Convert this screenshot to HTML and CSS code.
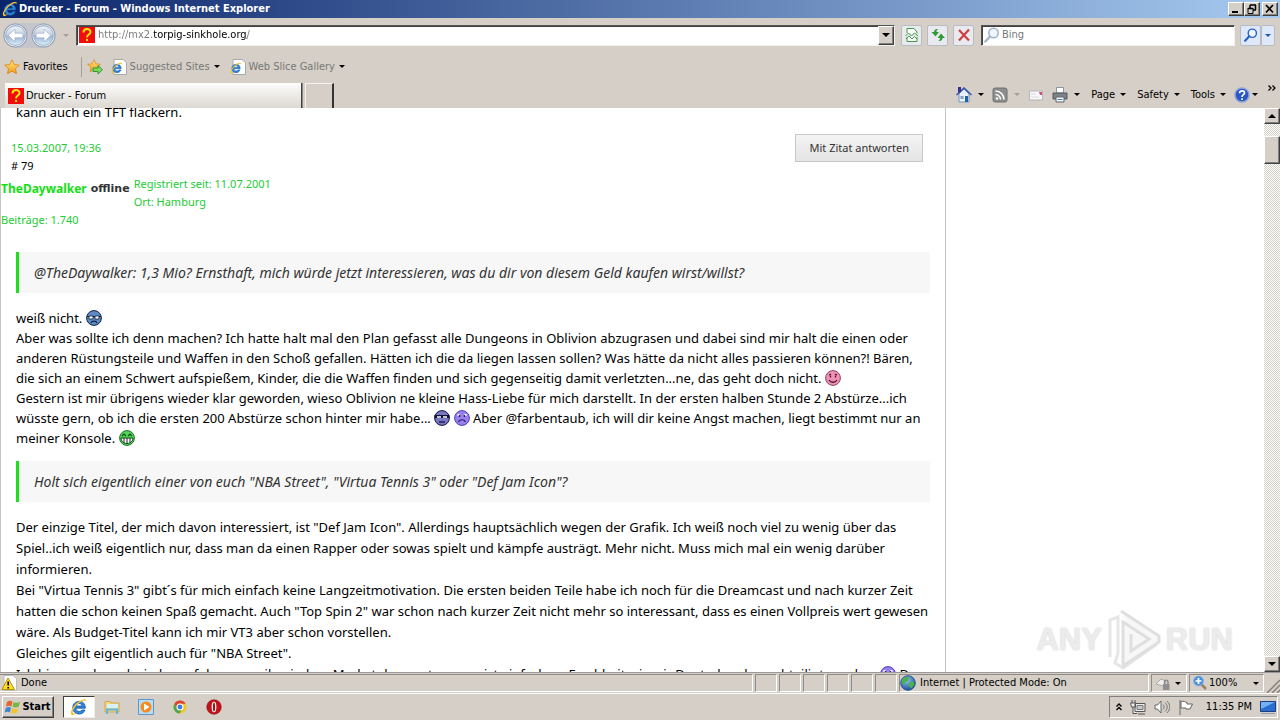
FILE: index.html
```html
<!DOCTYPE html>
<html lang="de">
<head>
<meta charset="utf-8">
<title>Drucker - Forum</title>
<link rel="stylesheet" href="styles.css">
</head>
<body>
<svg class="defs" aria-hidden="true">
  <defs>
    <radialGradient id="g-blue" cx="40%" cy="30%" r="70%"><stop offset="0" stop-color="#9cc4ee"/><stop offset="1" stop-color="#1d4fa0"/></radialGradient>
    <linearGradient id="g-orb" x1="0" y1="0" x2="0" y2="1"><stop offset="0" stop-color="#f4f6fa"/><stop offset=".48" stop-color="#c3cfe0"/><stop offset=".52" stop-color="#9db2d0"/><stop offset="1" stop-color="#d9f1fb"/></linearGradient>
    <linearGradient id="g-gold" x1="0" y1="0" x2="0" y2="1"><stop offset="0" stop-color="#ffe98a"/><stop offset="1" stop-color="#f09a12"/></linearGradient>
    <symbol id="ie" viewBox="0 0 16 16">
      <path d="M13.6 9H5.2c.2 2 1.4 3 3 3 1.200 0 2-.5 2.500-1.300h2.600c-.8 2.200-2.600 3.500-5.100 3.500C4.800 14.200 2.500 12 2.500 8.600 2.500 5.300 4.900 3 8.200 3c3.400 0 5.500 2.400 5.400 6zM5.300 7.200h5.500C10.600 5.700 9.700 4.900 8.100 4.900S5.500 5.700 5.300 7.200z" fill="#2f8be0" stroke="#1659ae" stroke-width=".8"/>
      <path d="M1.300 14.800C-.6 12.500 3.500 5.500 8.800 2.500 12.300.5 15.500.6 14.700 3.300 14.600 1.900 12.500 2 9.700 3.500 5 6.200.8 12.500 3 13.600c.8.400 2-.1 3.200-.8-1.700 1.700-3.900 3-4.900 2z" fill="#f2c230"/>
    </symbol>
    <symbol id="iepage" viewBox="0 0 16 16"><path d="M3 .5h9l3.500 3v12H3z" fill="#fff" stroke="#a9a9a9"/><use href="#ie" x="0" y="3" width="12" height="12"/></symbol>
    <symbol id="quest" viewBox="0 0 16 16"><path fill="#f20d0d" d="M0 0h16v16H0z"/><path d="M4.500 5.500C4.500 1 11.500 1 11.500 5c0 2.600-3.500 2.500-3.500 5.500" fill="none" stroke="#f5e60a" stroke-width="2"/><path fill="#f5e60a" d="M7 12h2v2H7z"/></symbol>
    <symbol id="star" viewBox="0 0 16 16"><path d="M8 .8l2.200 4.700 5.100.6-3.800 3.500 1 5.100L8 12.200l-4.500 2.500 1-5.100L.7 6.100l5.100-.6z" fill="url(#g-gold)" stroke="#d98412" stroke-width=".8"/></symbol>
    <symbol id="fly" viewBox="0 0 24 24"><circle cx="12" cy="12" r="11" fill="#fff" stroke="#8f9bb0"/><circle cx="12" cy="12" r="9.500" fill="url(#g-orb)" stroke="#9db0ca"/><path d="M5 12l6.500-6v3.800H19v4.400h-7.500V18z" fill="#fff" stroke="#8aa0bf" stroke-width=".5"/></symbol>
    <symbol id="lens" viewBox="0 0 16 16"><circle cx="9.500" cy="6" r="4.700" fill="#eef6fc" stroke="currentColor" stroke-width="1.600"/><path d="M6 9.500L1.300 14.500" stroke="currentColor" stroke-width="2.400" stroke-linecap="round"/></symbol>
    <symbol id="sad" viewBox="0 0 16 16"><circle cx="8" cy="8" r="7.400" fill="currentColor" stroke="#4e3cb4"/><path d="M3.500 5h2M10.500 5h2" stroke="#fff" stroke-width="2"/><path d="M5.500 5v2M10.500 5v2" stroke="#20206a" stroke-width="1.400"/><path d="M4.500 12c1-3 6-3 7 0" fill="none" stroke="#26206a" stroke-width="1.200"/></symbol>
  </defs>
</svg>

<header class="titlebar">
  <svg class="i16"><use href="#ie"/></svg>
  <h1>Drucker - Forum - Windows Internet Explorer</h1>
  <div class="winbtns">
    <button class="raised" aria-label="Minimize"><svg viewBox="0 0 12 10"><path d="M2 8h6" stroke="#000" stroke-width="2"/></svg></button>
    <button class="raised" aria-label="Restore"><svg viewBox="0 0 12 10"><path d="M4 1h6M4 1v3M9.500 1v5M7 6h3M2 4.500h5" fill="none" stroke="#000" stroke-width="1.500"/><path d="M2 4v5.500h5V4" fill="none" stroke="#000"/></svg></button>
    <button class="raised last" aria-label="Close"><svg viewBox="0 0 12 10"><path d="M2 1l7 7.500M9 1L2 8.500" stroke="#000" stroke-width="1.700"/></svg></button>
  </div>
</header>

<nav class="addressrow">
  <div class="orbs">
    <button aria-label="Back"><svg><use href="#fly"/></svg></button>
    <button aria-label="Forward" class="flip"><svg><use href="#fly"/></svg></button>
  </div>
  <button class="arrow pale history" aria-label="Recent pages"></button>
  <div class="sunken address">
    <svg class="i16"><use href="#quest"/></svg>
    <input class="url" aria-label="Address" value="http://mx2.torpig-sinkhole.org/">
    <button class="raised drop" aria-label="Show addresses"><i class="arrow big"></i></button>
  </div>
  <div class="tools">
    <button class="tool" aria-label="Compatibility View"><svg class="i16" viewBox="0 0 16 16"><path d="M3 6V1.500h7L13 5v1.500M3 10v4.500h10V10" fill="#fff" stroke="#3f9b45"/><path d="M1.500 9l3-3 3 3 3-3 3.500 3M2 12l3-3 3 3 2.500-2.500L13 12" fill="none" stroke="#3f9b45"/></svg></button>
    <button class="tool" aria-label="Refresh"><svg class="i16" viewBox="0 0 16 16"><path d="M8 2C5.500 1.500 4 3 4 5H1.500l4 4.500 3.500-4.500H6.500c0-1.500.5-2 1.500-3zM8.500 14c2.500.500 4-1 4-3H15l-4-4.500L7.500 11H10c0 1.500-.5 2-1.500 3z" fill="#2f9a38"/></svg></button>
    <button class="tool" aria-label="Stop"><svg class="i16" viewBox="0 0 16 16"><path d="M3 3l10 10.500M13 2.500L3 13.500" stroke="#cf4040" stroke-width="2.200"/></svg></button>
  </div>
  <div class="sunken search">
    <svg class="i16 paleLens"><use href="#lens"/></svg>
    <input aria-label="Search" placeholder="Bing">
  </div>
  <div class="split">
    <button class="tool" aria-label="Search the web"><svg class="blueLens"><use href="#lens"/></svg></button>
    <button class="tool narrow" aria-label="Search options"><i class="arrow blue"></i></button>
  </div>
</nav>

<nav class="favrow">
  <button class="link fav"><svg class="i16"><use href="#star"/></svg>Favorites</button>
  <button class="addfav" aria-label="Add to Favorites Bar"><svg class="i16" viewBox="0 0 16 16"><use href="#star" width="14" height="14"/><path d="M6 9h5V6.500l4.500 4.200L11 15v-2.500H6z" fill="#7ed957" stroke="#2f9a38"/></svg></button>
  <button class="link grey"><svg class="i16"><use href="#iepage"/></svg>Suggested Sites<i class="arrow"></i></button>
  <button class="link grey"><svg class="i16"><use href="#iepage"/></svg>Web Slice Gallery<i class="arrow"></i></button>
</nav>

<div class="tabrow">
  <button class="tab"><svg class="i16"><use href="#quest"/></svg>Drucker - Forum</button>
  <button class="newtab" aria-label="New tab"></button>
  <div class="commands">
    <button class="cmd" aria-label="Home"><svg class="i16" viewBox="0 0 16 16"><path d="M3 7v8h10V7L8 2z" fill="#e8f0fb" stroke="#7a8fc0"/><path d="M.5 8L8 1l7.500 7" fill="none" stroke="#3355b0" stroke-width="1.500"/><path fill="#3a2e8c" d="M2 0h3v4L2 6z"/><path fill="#1b63a8" d="M9 9h3v6H9z"/><path fill="#7f9ccc" d="M4.500 9h3v3h-3z"/></svg><i class="arrow"></i></button>
    <button class="cmd" aria-label="Feeds"><svg class="i16" viewBox="0 0 16 16"><rect x="1" y="1" width="14" height="14" rx="2" fill="#8d8d8d" stroke="#707070"/><circle cx="5" cy="11.500" r="1.300" fill="#fff"/><path d="M3.500 7.500a5 5 0 015 5M3.500 4a8.500 8.500 0 018.500 8.500" fill="none" stroke="#fff" stroke-width="1.600"/></svg><i class="arrow pale"></i></button>
    <button class="cmd" aria-label="Read mail"><svg class="i16" viewBox="0 0 16 16"><path d="M1.500 4h13v9h-13z" fill="#f8f8fa" stroke="#b5b5bd"/><path d="M3 7h5M3 10h8" stroke="#dcdce4"/><path d="M11 5h3v3h-2z" fill="#cc4f78"/></svg></button>
    <button class="cmd" aria-label="Print"><svg class="i16" viewBox="0 0 16 16"><path fill="#fff" stroke="#8b95a3" d="M4.500.5h7V6h-7z"/><path fill="#7c8087" stroke="#55595f" d="M1 6h14v6H1z"/><path fill="#f2f6fa" stroke="#667" d="M4 10h8v5H4z"/><path stroke="#4b86bc" d="M5.500 12.500h5"/></svg><i class="arrow"></i></button>
    <button class="cmd text">Page<i class="arrow"></i></button>
    <button class="cmd text">Safety<i class="arrow"></i></button>
    <button class="cmd text">Tools<i class="arrow"></i></button>
    <button class="cmd help" aria-label="Help"><svg class="i16" viewBox="0 0 16 16"><circle cx="8" cy="8" r="7" fill="#2b57c5" stroke="#8ba3d8" stroke-width="1.500"/><path d="M5.500 6.200c0-3.200 5-3 5-.2C10.500 7.700 8 7.700 8 10" fill="none" stroke="#fff" stroke-width="1.700"/><path fill="#fff" d="M7.200 11.200h1.700v1.700H7.200z"/></svg><i class="arrow"></i></button>
    <button class="cmd more" aria-label="More commands"><svg viewBox="0 0 8 6"><path d="M.5.500L3 3 .5 5.500M4.500.500L7 3 4.500 5.500" fill="none" stroke="#000" stroke-width="1.300"/></svg></button>
  </div>
</div>

<div class="viewport">
  <main class="page">
    <p class="prev">kann auch ein TFT flackern.</p>
    <section class="posthead">
      <div>
        <time class="green">15.03.2007, 19:36</time>
        <div class="num"># 79</div>
      </div>
      <button class="quotebtn">Mit Zitat antworten</button>
    </section>
    <section class="author">
      <a class="name" href="#u">TheDaywalker</a>
      <b>offline</b>
      <div class="green meta">Registriert seit: 11.07.2001<br>Ort: Hamburg</div>
    </section>
    <div class="green posts">Beiträge: 1.740</div>
    <article>
      <blockquote>@TheDaywalker: 1,3 Mio? Ernsthaft, mich würde jetzt interessieren, was du dir von diesem Geld kaufen wirst/willst?</blockquote>
      <p class="first">weiß nicht. <svg class="smile" viewBox="0 0 16 16"><circle cx="8" cy="8" r="7.400" fill="#5f8bc4" stroke="#0f2444"/><path d="M1 6.500h14" stroke="#10203c"/><path fill="#fff" stroke="#10203c" stroke-width=".8" d="M3 6h4v3H3zM9 6h4v3H9z"/><path d="M5 13c1-2.500 5-2.500 6 0" fill="none" stroke="#10203c" stroke-width="1.300"/></svg><br>
Aber was sollte ich denn machen? Ich hatte halt mal den Plan gefasst alle Dungeons in Oblivion abzugrasen und dabei sind mir halt die einen oder<br>
anderen Rüstungsteile und Waffen in den Schoß gefallen. Hätten ich die da liegen lassen sollen? Was hätte da nicht alles passieren können?! Bären,<br>
die sich an einem Schwert aufspießem, Kinder, die die Waffen finden und sich gegenseitig damit verletzten...ne, das geht doch nicht. <svg class="smile" viewBox="0 0 16 16"><circle cx="8" cy="8" r="7.400" fill="#ee91b4" stroke="#8e4360"/><path d="M4 5l2-1M12 5l-2-1M5.500 5.500v2M10.500 5.500v2" stroke="#4c1430" stroke-width="1.300"/><path d="M4 10c2 3 6 3 8 0" fill="none" stroke="#4c1430" stroke-width="1.300"/></svg><br>
Gestern ist mir übrigens wieder klar geworden, wieso Oblivion ne kleine Hass-Liebe für mich darstellt. In der ersten halben Stunde 2 Abstürze...ich<br>
wüsste gern, ob ich die ersten 200 Abstürze schon hinter mir habe... <svg class="smile" viewBox="0 0 16 16"><circle cx="8" cy="8" r="7.400" fill="#7777c4" stroke="#14143c"/><path d="M.5 6.500h15" stroke="#111133" stroke-width="3"/><path d="M3 7h4M9 7h4" stroke="#fff" stroke-width="1.500"/><path d="M5 12h6" stroke="#14143c" stroke-width="1.300"/></svg> <svg class="smile violet"><use href="#sad"/></svg> Aber @farbentaub, ich will dir keine Angst machen, liegt bestimmt nur an<br>
meiner Konsole. <svg class="smile" viewBox="0 0 16 16"><circle cx="8" cy="8" r="7.400" fill="#4fd858" stroke="#22742c"/><path d="M3 6l2-2 2 2M9 6l2-2 2 2" fill="none" stroke="#0c4c14" stroke-width="1.200"/><path d="M2 8h12c0 3-2.500 5.500-6 5.500S2 11 2 8z" fill="#fff" stroke="#124c1a"/><path d="M5 8v5M8 8v5.500M11 8v5" stroke="#222"/></svg></p>
      <blockquote>Holt sich eigentlich einer von euch "NBA Street", "Virtua Tennis 3" oder "Def Jam Icon"?</blockquote>
      <p class="second">Der einzige Titel, der mich davon interessiert, ist "Def Jam Icon". Allerdings hauptsächlich wegen der Grafik. Ich weiß noch viel zu wenig über das<br>
Spiel..ich weiß eigentlich nur, dass man da einen Rapper oder sowas spielt und kämpfe austrägt. Mehr nicht. Muss mich mal ein wenig darüber<br>
informieren.<br>
Bei "Virtua Tennis 3" gibt´s für mich einfach keine Langzeitmotivation. Die ersten beiden Teile habe ich noch für die Dreamcast und nach kurzer Zeit<br>
hatten die schon keinen Spaß gemacht. Auch "Top Spin 2" war schon nach kurzer Zeit nicht mehr so interessant, dass es einen Vollpreis wert gewesen<br>
wäre. Als Budget-Titel kann ich mir VT3 aber schon vorstellen.<br>
Gleiches gilt eigentlich auch für "NBA Street".<br>
Ich bin gerade mal wieder auf dem amerikanischen Marketplace unterwegs, ist einfach ne Frechheit wie wir Deutschen benachteiligt werden. <svg class="smile violet"><use href="#sad"/></svg> Da</p>
    </article>
  </main>
  <div class="scrollbar">
    <button class="raised" aria-label="Scroll up"><i class="arrow up"></i></button>
    <div class="raised thumb"></div>
    <button class="raised end" aria-label="Scroll down"><i class="arrow big"></i></button>
  </div>
  <div class="watermark">
    <span>ANY</span>
    <svg viewBox="0 0 56 64"><path d="M4 49V12l8-3v36l-3 10 8 5 34-24" fill="none" stroke="#e6e6e6" stroke-width="3"/><path d="M15 3l38 25v6L17 58V14l26 17-18 12V26" fill="#f7f7f7" stroke="#dfdfdf" stroke-width="3"/></svg>
    <span>RUN</span>
  </div>
</div>

<footer class="status">
  <div class="cell done"><svg class="i16" viewBox="0 0 16 16"><path fill="#fff" stroke="#bbb" d="M3 .5h9l3.500 3v12H3z"/><path d="M7 3L1 14.500h12.500z" fill="#ffdc23" stroke="#b89400"/><path d="M7.200 6.500v4M7.200 12v1.500" stroke="#000" stroke-width="1.600"/></svg>Done</div>
  <div class="cell sm"></div><div class="cell sm"></div><div class="cell sm"></div><div class="cell sm"></div><div class="cell sm"></div><div class="cell sm"></div>
  <div class="cell zone"><svg class="i16" viewBox="0 0 16 16"><circle cx="8" cy="8" r="7.300" fill="url(#g-blue)" stroke="#255a94"/><path d="M3 4c2-2 5-2.500 6-1.500L8 6 5 7.500 4 10 1.500 8zM9 8l4-2 1.500 3-3 4.500-2.500-2z" fill="#48b348"/></svg>Internet | Protected Mode: On</div>
  <button class="cell lock" aria-label="Privacy"><svg class="i16" viewBox="0 0 16 16"><path d="M1 9l5-5 5 2-3 5z" fill="#eee" stroke="#aaa"/><path d="M9.500 9V7c0-2.500 3.500-2.500 3.500 0v2" fill="none" stroke="#888" stroke-width="1.400"/><path fill="#8f8f8f" d="M8 9h6.500v6H8z"/></svg><i class="arrow"></i></button>
  <button class="cell zoom"><svg class="i16" viewBox="0 0 16 16"><path d="M9 9l5 5" stroke="#9a8260" stroke-width="2.500"/><circle cx="6.500" cy="6" r="5" fill="#4c8ede" stroke="#8fb5e4"/><path d="M3.500 6h6M6.500 3v6" stroke="#fff" stroke-width="1.700"/></svg>100%<i class="arrow"></i></button>
  <svg class="grip" viewBox="0 0 14 14"><path d="M1 14L14 1M6 14l8-8M11 14l3-3" stroke="#858178" stroke-width="1.500"/></svg>
</footer>

<footer class="taskbar">
  <button class="raised start"><svg viewBox="0 0 16 16"><path d="M2 3c2-1.500 4-1.500 5.500-.3L6.300 7.500C5 6.500 3 6.500 1 7.700z" fill="#e8632c"/><path d="M8.500 3c2 1.200 4 1 6.500 0l-1.300 4.700c-2.200 1-4.200 1-6.200 0z" fill="#76b843"/><path d="M.8 9c2-1.200 4-1.200 5.200 0L4.800 13.500c-1.500-1-3.300-1-5 0z" fill="#3d86d0"/><path d="M7.200 9c2 1.200 4.200 1.200 6.200 0L12 13.700c-2 1-4 1-6 0z" fill="#f4c430"/></svg>Start</button>
  <button class="task active" aria-label="Internet Explorer"><svg><use href="#ie"/></svg></button>
  <button class="task" aria-label="Explorer"><svg viewBox="0 0 16 16"><path fill="#f3d67c" stroke="#d0a94a" d="M1 2.500h5l1 1.500h8v9H1z"/><path fill="#d8f0fa" d="M3 5h11v4H3z"/><path fill="none" stroke="#62b5dd" stroke-width="2" d="M3 15v-4.500h10V15"/></svg></button>
  <button class="task" aria-label="Media Player"><svg viewBox="0 0 16 16"><path fill="#b8dcf6" stroke="#5c98cc" d="M.5.500h15v15H.5z"/><circle cx="8" cy="8" r="5.500" fill="#f68a1c"/><path fill="#fff" d="M6 4.500L11.500 8 6 11.500z"/></svg></button>
  <button class="task" aria-label="Chrome"><svg viewBox="0 0 16 16"><circle cx="8" cy="8" r="6.500" fill="#f3c623"/><path d="M2.400 4.700A6.500 6.500 0 0113.600 4.700H8L5.200 9.600z" fill="#dd4132"/><path d="M2.400 4.700A6.500 6.500 0 007.500 14.500L10.800 9.600 8 11 5.200 9.600z" fill="#4ca64c"/><circle cx="8" cy="8" r="3" fill="#3d7fd9" stroke="#fff" stroke-width="1.100"/></svg></button>
  <button class="task" aria-label="Opera"><svg viewBox="0 0 16 16"><circle cx="8" cy="8" r="7.300" fill="#c0131a" stroke="#7d0a10" stroke-width=".5"/><ellipse cx="8" cy="8" rx="2.400" ry="5.300" fill="#fff"/><ellipse cx="8" cy="8" rx="1.100" ry="4.500" fill="#a61016"/></svg></button>
  <div class="tray">
    <svg class="chev" viewBox="0 0 6 8"><path d="M.5 3.500L3 1l2.500 2.500M.5 7L3 4.500 5.500 7" fill="none" stroke="#000" stroke-width="1.300"/></svg>
    <svg class="i16" viewBox="0 0 16 16"><path d="M5 4.500h10v8H5zM8 15h7M2 1v3M5 1v3M.5 4h5v4h-4zM3 8v6.500h4" fill="#eee" stroke="#555"/><path fill="#c8c8c8" stroke="#777" d="M7 6.500h6v4H7z"/></svg>
    <svg class="i16" viewBox="0 0 16 16"><path d="M1 6h2.500L7 2v12l-3.500-4H1z" fill="#fff" stroke="#666"/><path d="M9 5.500c1.500 1.500 1.500 3.500 0 5M11 3.500c3 3 3 6 0 9M13 2c4 4 3.500 8 0 12" fill="none" stroke="#777"/></svg>
    <svg class="i16" viewBox="0 0 16 16"><path d="M2 1v15M3 2.500c3-1 4 .5 6 1v1.500h5.500L12 10H8V9H3z" fill="#fff" stroke="#666"/></svg>
    <time>11:35 PM</time>
    <svg class="i16" viewBox="0 0 16 16"><path fill="#2a6fd0" stroke="#1b3f7e" d="M.5 2.500h15v10H.5z"/><path fill="#73b1f2" d="M1 3h14L1 10z"/><path stroke="#8ea4bd" d="M1 14.500h14"/></svg>
  </div>
</footer>
</body>
</html>
```

FILE: styles.css
```css
* { box-sizing: border-box; }

body {
  margin: 0;
  height: 100vh;
  display: flex;
  flex-direction: column;
  overflow: hidden;
  background: #d5cfc7;
  color: #000;
  font: 11px/16px "DejaVu Sans Condensed", "Noto Sans", sans-serif;
}

button, input {
  margin: 0;
  padding: 0;
  border: 0;
  background: none;
  color: inherit;
  font: inherit;
}

svg { display: block; flex: none; }
.defs { position: absolute; width: 0; height: 0; }
.i16 { width: 16px; height: 16px; }

.raised {
  display: flex;
  align-items: center;
  justify-content: center;
  background: #d5cfc7;
  border: 1px solid;
  border-color: #fff #404040 #404040 #fff;
  box-shadow: inset -1px -1px #808080;
}

.sunken {
  display: flex;
  align-items: center;
  background: #fff;
  border: 1px solid;
  border-color: #555 #f4f2ee #f4f2ee #555;
  box-shadow: inset 1px 1px #404040;
}

.arrow {
  flex: none;
  width: 0;
  height: 0;
  border: 3px solid transparent;
  border-top-color: #000;
  border-bottom-width: 0;
}
.arrow.pale { border-top-color: #a59f97; }
.arrow.blue { border-top-color: #1d58b8; }
.arrow.big { border-width: 4px 4px 0; }
.arrow.up { border-width: 0 4px 4px; border-bottom-color: #000; }

/* title bar */
.titlebar {
  display: flex;
  align-items: center;
  flex: none;
  height: 18px;
  padding: 0 2px;
  gap: 1px;
  background: linear-gradient(90deg, #0a246a, #a6caf0);
  color: #fff;
}
.titlebar h1 { flex: 1; margin: 0; font-size: 11px; }
.winbtns { display: flex; }
.winbtns button { width: 16px; height: 14px; }
.winbtns svg { width: 12px; height: 10px; }
.winbtns .last { margin-left: 2px; }

/* address row */
.addressrow {
  display: flex;
  align-items: center;
  flex: none;
  height: 34px;
  padding: 0 5px 0 3px;
}
.orbs { display: flex; gap: 3px; background: #c5c6cb; border-radius: 13px; }
.orbs svg { width: 25px; height: 25px; }
.flip { transform: scaleX(-1); }
.history { margin: 0 7px; }
.address { flex: 1; height: 21px; padding-left: 2px; }
.url {
  flex: 1;
  min-width: 0;
  padding-left: 3px;
  color: transparent;
  background: linear-gradient(90deg, #777 58px, #000 58px, #000 152px, #777 152px);
  -webkit-background-clip: text;
  background-clip: text;
}
.drop { width: 16px; height: 19px; }
.tools { display: flex; gap: 5px; margin: 0 7px 0 6px; }
.tool {
  display: flex;
  align-items: center;
  justify-content: center;
  width: 21px;
  height: 21px;
  background: #e9eaf0;
  border: 1px solid #b9bbc2;
  border-radius: 2px;
}
.search { flex: 0 1 254px; height: 21px; padding-left: 2px; gap: 2px; }
.search input { flex: 1; min-width: 0; }
.search input::placeholder { color: #777; opacity: 1; }
.paleLens { color: #a3b4c8; }
.blueLens { width: 14px; height: 14px; color: #2560c4; }
.split { display: flex; margin-left: 5px; }
.split .tool { background: #dfe8f8; }
.split .narrow { width: 14px; }

/* favourites bar */
.favrow { display: flex; align-items: center; flex: none; height: 29px; padding-left: 4px; }
.link { display: flex; align-items: center; gap: 3px; }
.link .arrow { margin-left: 1px; }
.fav { padding-right: 13px; border-right: 1px solid #a5a099; height: 20px; }
.addfav { margin: 0 8px 0 5px; }
.grey { color: #777; margin-right: 10px; }

/* tab row */
.tabrow { display: flex; align-items: stretch; flex: none; height: 27px; padding: 2px 0 0 5px; }
.tab {
  display: flex;
  align-items: center;
  gap: 2px;
  flex: 0 1 297px;
  padding-left: 3px;
  background: linear-gradient(#fdfdfc, #dcd8d2);
  border-right: 1px solid #404040;
  box-shadow: 1px 0 #888;
}
.newtab { width: 29px; margin-left: 3px; border: 1px solid #f5f3f0; border-right: 2px solid #333; border-bottom: 0; }
.commands { display: flex; align-items: center; gap: 8px; margin-left: auto; padding: 0 4px 2px 0; }
.cmd { display: flex; align-items: center; gap: 5px; }
.cmd .arrow { margin-left: 1px; }
.text { margin-left: 3px; gap: 4px; }
.help { gap: 1px; }
.more { align-self: flex-start; margin: 2px 0 0 2px; }
.more svg { width: 8px; height: 6px; }

/* document */
.viewport { position: relative; display: flex; flex: 1; min-height: 0; background: #fff; }
.page {
  flex: 0 1 946px;
  overflow: hidden;
  border: 1px solid #c4c4c4;
  border-width: 0 1px;
  font: 11px/18px "Noto Sans", sans-serif;
}
.page p { margin: 0; white-space: nowrap; font-size: 13px; }
.prev { height: 26px; padding-left: 15px; line-height: 8px; }
.green { color: #22cc33; }
.posthead { display: flex; justify-content: space-between; padding: 0 22px 0 10px; }
.posthead time { display: block; margin-top: 5px; }
.quotebtn {
  height: 28px;
  padding: 0 13px;
  background: linear-gradient(#f4f4f4, #e4e4e4);
  border: 1px solid #c8c8c8;
  color: #333;
}
.author { display: flex; align-items: center; gap: 4px; height: 36px; }
.author b { padding-bottom: 8px; color: #333; font-family: "DejaVu Sans", sans-serif; }
.name { padding-bottom: 8px; color: #11e011; font-size: 12px; font-weight: bold; text-decoration: none; }
.posts { margin-bottom: 23px; }
article { padding: 0 15px; }
blockquote {
  margin: 0;
  padding: 10px 15px;
  background: #f7f7f7;
  border-left: 3px solid #1de01d;
  color: #333;
  font-size: 14px;
  font-style: italic;
  line-height: 21px;
  white-space: nowrap;
}
.page .first { line-height: 20px; padding: 15px 0 13px; }
.page .second { line-height: 21px; padding-top: 15px; }
.smile { display: inline-block; width: 16px; height: 16px; vertical-align: -3px; }
.violet { color: #9a80ee; }

.scrollbar {
  display: flex;
  flex-direction: column;
  flex: none;
  width: 16px;
  margin-left: auto;
  background: repeating-conic-gradient(#fff 0 25%, #d5cfc7 0 50%) 0 0 / 2px 2px;
}
.scrollbar button { height: 16px; }
.thumb { height: 28px; margin-top: 12px; }
.end { margin-top: auto; }

.watermark {
  position: absolute;
  right: 47px;
  bottom: 0;
  display: flex;
  align-items: center;
  gap: 4px;
  color: #ececec;
  font: bold 31px/64px "Liberation Sans", sans-serif;
  text-shadow: 0 0 2px #ccc;
}
.watermark svg { width: 56px; height: 64px; }

/* status bar */
.status { display: flex; flex: none; height: 22px; padding-top: 1px; gap: 2px; border-top: 1px solid #999; border-bottom: 1px solid #fff; }
.cell {
  display: flex;
  align-items: center;
  gap: 4px;
  height: 18px;
  border: 1px solid;
  border-color: #908c85 #fff #fff #908c85;
}
.done { flex: 1; border-left: 0; padding-left: 1px; }
.sm { width: 22px; }
.zone { width: 250px; }
.lock { width: 36px; padding-left: 3px; }
.zoom { width: 75px; padding-left: 2px; gap: 1px; }
.zoom .arrow { margin: 0 4px 0 auto; }
.grip { width: 14px; height: 14px; align-self: flex-end; }

/* taskbar */
.taskbar { display: flex; align-items: center; flex: none; height: 26px; padding: 0 2px; gap: 0; }
.taskbar > button > svg { width: 16px; height: 16px; }
.start { width: 52px; height: 22px; gap: 1px; font-weight: bold; margin-right: 9px; }
.task { display: flex; align-items: center; justify-content: center; width: 34px; height: 22px; }
.active { background: #fff; border: 1px solid; border-color: #404040 #eee #eee #404040; }
.taskbar > .active { width: 32px; }
.taskbar > .active > svg { width: 18px; height: 18px; }
.tray {
  display: flex;
  align-items: center;
  gap: 8px;
  height: 22px;
  margin-left: auto;
  padding: 0 1px 0 6px;
  border: 1px solid;
  border-color: #808080 #fff #fff #808080;
}
.chev { width: 6px; height: 8px; }
.tray time { margin-left: 4px; }
```
